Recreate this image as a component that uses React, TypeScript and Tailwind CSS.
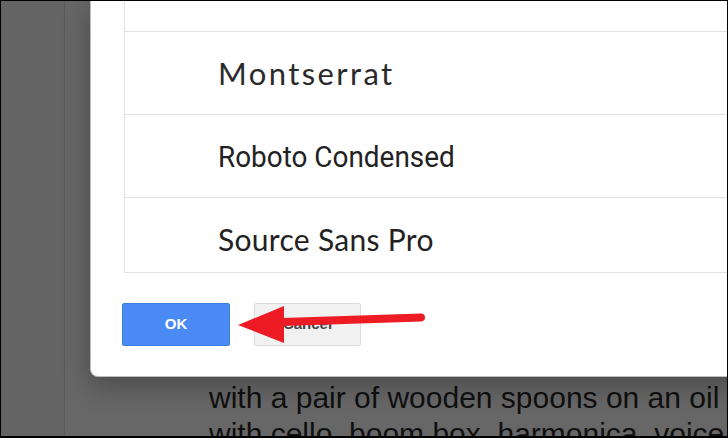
import React from 'react'

const fonts = [
  { id: 1, name: '', cls: '' },
  { id: 2, name: 'Montserrat', cls: "font-['Lato',sans-serif] font-normal text-[31px] tracking-[2.4px] text-[#2a2a2a]" },
  { id: 3, name: 'Roboto Condensed', cls: "font-['Roboto',sans-serif] text-[30px] inline-block scale-x-[0.93] origin-left" },
  { id: 4, name: 'Source Sans Pro', cls: "font-['Lato',sans-serif] text-[30px] tracking-[0.3px]" },
]

const App = () => {
  return (
    <div className='relative w-[728px] h-[438px] overflow-hidden border border-b-2 border-black bg-[#666766]'>
      {/* page behind the overlay */}
      <div className='flex h-full'>
        <div className='w-[64px] h-full bg-[#636463] border-r border-[#5a5a5a]'></div>
        <div className="flex-1 pl-[144px] pt-[379px] font-['Liberation_Sans',Arial,sans-serif] text-[30px] leading-[36px] text-[#101010] whitespace-nowrap">
          <p>with a pair of wooden spoons on an oil</p>
          <p>with cello, boom box, harmonica, voice</p>
        </div>
      </div>

      {/* dialog */}
      <div className='absolute left-[89px] top-[-1px] right-[-20px] h-[377px] bg-white rounded-bl-lg border-l border-b border-[#bdbdbd] shadow-[0_8px_28px_rgba(0,0,0,0.3)]'>
        <div className='ml-[33px] h-[273px] border-l border-b border-[#e2e2e2] overflow-hidden'>
          {fonts.map((f, i) => (
            <div key={f.id} className={i === 0 ? 'h-[31px]' : 'h-[83px] border-t border-[#e2e2e2] flex items-center pl-[93px] text-[#222]'}>
              {f.name && <span className={f.cls}>{f.name}</span>}
            </div>
          ))}
        </div>

        <div className="flex gap-[24px] ml-[31px] mt-[30px] font-['Liberation_Sans',Arial,sans-serif] text-[15px] font-bold">
          <button className='w-[108px] h-[43px] rounded-[2px] bg-[#4a8af4] border border-[#3b7ce9] text-white'>OK</button>
          <button className='w-[107px] h-[43px] rounded-[2px] bg-[#f1f1f1] border border-[#dcdcdc] text-[#444]'>Cancel</button>
        </div>
      </div>

      {/* red arrow */}
      <svg className='absolute left-0 top-0' width='728' height='438'>
        <path d='M282 321 L420 316.5' stroke='#ed1c24' strokeWidth='8' strokeLinecap='round' fill='none' />
        <polygon points='237,324 283,305 283,342' fill='#ed1c24' />
      </svg>
    </div>
  )
}

export default App
